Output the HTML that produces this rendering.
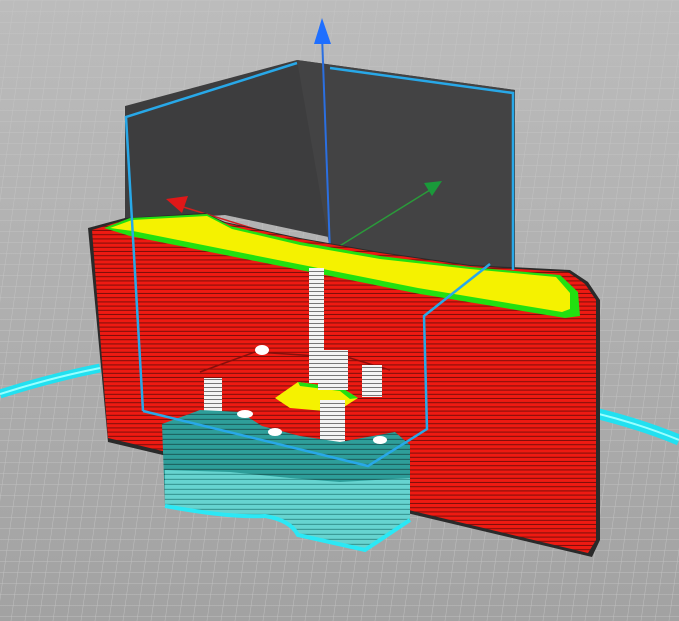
<!DOCTYPE html>
<html><head><style>
html,body{margin:0;padding:0;background:#a8a8a8;}
svg{display:block;}
</style></head><body>
<svg width="679" height="621" viewBox="0 0 679 621" xmlns="http://www.w3.org/2000/svg">
<defs>
<linearGradient id="bg" x1="0" y1="0" x2="0" y2="1">
<stop offset="0" stop-color="#bcbcbc"/><stop offset="1" stop-color="#a2a2a2"/>
</linearGradient>
<pattern id="grid" width="14" height="11" patternUnits="userSpaceOnUse" patternTransform="skewX(-8)">
<path d="M0 0H14M0 0V11" stroke="#c6c6c6" stroke-width="1" fill="none"/>
</pattern>
<pattern id="redl" width="6" height="4.2" patternUnits="userSpaceOnUse">
<rect width="6" height="4.2" fill="#ee1a12"/>
<rect y="3.2" width="6" height="1" fill="#7a0e0a"/>
</pattern>
<pattern id="teall" width="6" height="5" patternUnits="userSpaceOnUse">
<rect width="6" height="5" fill="#2e9e9a"/>
<rect y="3.8" width="6" height="1.2" fill="#1d6664"/>
</pattern>
<pattern id="teal2" width="6" height="5" patternUnits="userSpaceOnUse">
<rect width="6" height="5" fill="#66d4d0"/>
<rect y="3.8" width="6" height="1.2" fill="#3a9c98"/>
</pattern>
<pattern id="whit" width="6" height="4" patternUnits="userSpaceOnUse">
<rect width="6" height="4" fill="#f4f4f4"/>
<rect y="3" width="6" height="1" fill="#777"/>
</pattern>
</defs>
<rect width="679" height="621" fill="url(#bg)"/>
<rect width="679" height="621" fill="url(#grid)" opacity="0.8"/>
<!-- cyan rings -->
<path d="M0 394 Q50 378 100 368" stroke="#22e0f0" stroke-width="9" fill="none"/>
<path d="M0 394 Q50 378 100 368" stroke="#9ff" stroke-width="2" fill="none"/>
<path d="M595 413 Q640 424 679 440" stroke="#22e0f0" stroke-width="11" fill="none"/>
<path d="M595 413 Q640 424 679 440" stroke="#9ff" stroke-width="2" fill="none"/>
<!-- dark box -->
<polygon points="125,106 297,60 515,90 515,275 460,265 225,215 125,222" fill="#3d3d3e"/>
<polygon points="297,60 515,90 515,275 330,250" fill="#434344"/>
<!-- axes -->
<line x1="330" y1="252" x2="322" y2="35" stroke="#2b6fe0" stroke-width="2"/>
<polygon points="322,18 314,44 331,44" fill="#1f6fff"/>
<line x1="330" y1="252" x2="180" y2="206" stroke="#d02020" stroke-width="1.5"/>
<polygon points="166,199 188,196 182,213" fill="#e01818"/>
<line x1="330" y1="252" x2="430" y2="190" stroke="#2a9a3a" stroke-width="1.5"/>
<polygon points="442,181 424,183 432,196" fill="#1a9a3a"/>
<!-- red block -->
<polygon points="88,228 125,218 205,213 225,222 300,238 380,252 470,265 570,270 588,282 600,300 600,540 592,557 108,442" fill="#2a2a2a"/>
<polygon points="92,230 125,220 205,214 225,223 300,239 380,253 470,266 568,272 585,284 596,300 596,540 588,553 108,438" fill="url(#redl)"/>
<!-- green+yellow top -->
<polygon points="104,228 130,218 207,214 230,226 300,242 380,256 470,267 560,275 578,292 580,316 565,318 420,294 130,236" fill="#22e010"/>
<polygon points="110,228 132,220 207,216 232,229 300,245 380,259 470,269 556,277 570,293 570,309 562,312 418,288 133,231" fill="#f5f200"/>
<!-- inner pocket -->
<polygon points="200,372 255,352 350,358 390,370 395,412 345,430 265,410 205,395" fill="url(#redl)"/>
<polyline points="200,372 255,352 350,358 390,370" stroke="#8a0e0a" stroke-width="1.5" fill="none"/>
<polygon points="275,398 298,382 342,388 358,398 336,412 290,408" fill="#f5f200"/>
<polygon points="298,382 342,388 358,398 350,399 340,391 300,386" fill="#22e010"/>
<!-- white posts -->
<rect x="309" y="268" width="15" height="115" fill="url(#whit)"/>
<rect x="318" y="350" width="30" height="40" fill="url(#whit)"/>
<rect x="362" y="365" width="20" height="32" fill="url(#whit)"/>
<rect x="204" y="378" width="18" height="48" fill="url(#whit)"/>
<rect x="320" y="400" width="25" height="50" fill="url(#whit)"/>
<ellipse cx="262" cy="350" rx="7" ry="5" fill="#fff"/>
<!-- teal block -->
<polygon points="162,424 200,410 240,412 262,426 300,436 340,442 395,432 410,445 410,520 365,550 298,535 280,518 230,514 165,506" fill="url(#teall)"/>
<polygon points="165,470 230,472 290,478 340,482 410,478 410,520 365,550 298,535 280,518 230,514 165,506" fill="url(#teal2)"/>
<path d="M165,506 Q230,518 265,516 Q290,520 298,535 L365,550 L410,520" stroke="#2be8f5" stroke-width="4" fill="none"/>
<ellipse cx="245" cy="414" rx="8" ry="4" fill="#fff"/>
<ellipse cx="275" cy="432" rx="7" ry="4" fill="#fff"/>
<ellipse cx="380" cy="440" rx="7" ry="4" fill="#fff"/>
<!-- blue selection outline -->
<polyline points="143,411 126,117 297,63" stroke="#28a8e8" stroke-width="2.5" fill="none"/>
<polyline points="330,68 513,93 513,270" stroke="#28a8e8" stroke-width="2.5" fill="none"/>
<polyline points="490,264 424,316 427,429 368,466 143,411" stroke="#28a8e8" stroke-width="2.5" fill="none"/>
</svg>
</body></html>
